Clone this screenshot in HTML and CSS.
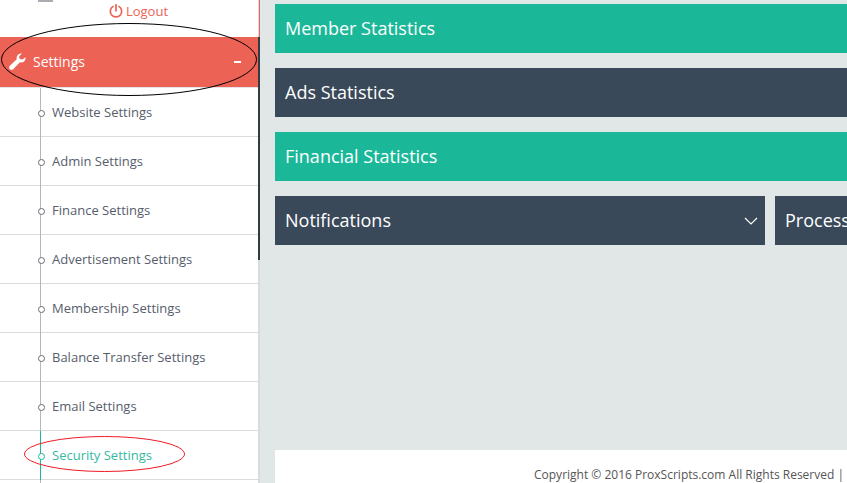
FILE: index.html
```html
<!DOCTYPE html>
<html lang="en">
<head>
<meta charset="utf-8">
<title>Settings</title>
<link rel="stylesheet" href="styles.css">
</head>
<body>
<div class="app">
  <aside class="sidebar">
    <div class="user">
      <span class="avatar-stub"></span>
      <a class="logout">
        <svg class="power" viewBox="0 0 14 14" width="14" height="14"><path d="M4 2.400A5.700 5.700 0 1 0 10 2.400" fill="none" stroke="#ec6255" stroke-width="1.700" stroke-linecap="round"/><path d="M7 .8v6" fill="none" stroke="#ec6255" stroke-width="1.700" stroke-linecap="round"/></svg>Logout
      </a>
    </div>
    <div class="menu-head">
      <svg class="wrench" viewBox="0 0 16 16" width="17" height="17"><path fill="#fff" d="M15.6 3.9c.2 1.500-.3 3-1.400 4-1.100 1-2.600 1.300-4 .9L4 15.200c-.9.9-2.300.9-3.200 0s-.9-2.300 0-3.200l6.500-6.100C6.900 4.500 7.200 3 8.200 1.900 9.200.8 10.700.3 12.200.5L9.500 3.200l.6 2.400 2.400.6z"/></svg>
      <span class="menu-label">Settings</span>
      <span class="minus"></span>
    </div>
    <ul class="submenu">
      <li>Website Settings</li>
      <li>Admin Settings</li>
      <li>Finance Settings</li>
      <li>Advertisement Settings</li>
      <li>Membership Settings</li>
      <li>Balance Transfer Settings</li>
      <li>Email Settings</li>
      <li class="active">Security Settings</li>
      <li></li>
    </ul>
    <span class="edge-red"></span>
    <span class="edge-dark"></span>
    <svg class="ring-black" width="258" height="74" viewBox="0 0 258 74"><ellipse cx="129" cy="36.500" rx="127.500" ry="36" fill="none" stroke="#000" stroke-width="1"/></svg>
    <svg class="ring-red" width="163" height="37" viewBox="0 0 163 37"><ellipse cx="81.500" cy="18" rx="80" ry="17.500" fill="none" stroke="#ee1c25" stroke-width="1"/></svg>
  </aside>
  <main class="main">
    <div class="panel teal"><h2>Member Statistics</h2></div>
    <div class="panel navy"><h2>Ads Statistics</h2></div>
    <div class="panel teal"><h2>Financial Statistics</h2></div>
    <div class="split">
      <div class="panel navy half">
        <h2>Notifications</h2>
        <svg class="chev" width="14" height="8" viewBox="0 0 14 8"><path d="M1 1l6 6 6-6" fill="none" stroke="#fff" stroke-width="1.200"/></svg>
      </div>
      <div class="panel navy rest"><h2>Processing</h2></div>
    </div>
    <footer class="foot"><span>Copyright © 2016 ProxScripts.com All Rights Reserved |</span></footer>
  </main>
</div>
</body>
</html>
```
FILE: styles.css
```css
* { box-sizing: border-box; }
html, body { margin: 0; height: 100%; overflow: hidden; }
body { font-family: "Open Sans", sans-serif; background: #e1e6e6; }
.app { display: flex; width: 847px; height: 483px; overflow: hidden; }

.sidebar {
  position: relative;
  flex: 0 0 260px;
  background: #fff;
  border-right: 2px solid #d8dcdc;
}
.user { position: relative; height: 37px; padding-top: 1px; display: flex; justify-content: center; padding-left: 19px; }
.avatar-stub { position: absolute; left: 38px; top: 0; width: 15px; height: 2px; background: #a9adb2; }
.logout { display: flex; align-items: center; height: 19px; font-size: 13px; color: #ec6255; }
.power { margin-right: 3px; }

.menu-head {
  display: flex;
  align-items: center;
  height: 51px;
  background: #ec6255;
  border-bottom: 1px solid #e4e4e4;
  color: #fff;
  padding: 0 17px 1px 9px;
}
.wrench { margin-right: 7px; }
.menu-label { font-size: 14px; flex: 1; }
.minus { width: 7px; height: 2px; background: #fff; }

.submenu { list-style: none; margin: 0; padding: 0; position: relative; }
.submenu li {
  position: relative;
  height: 49px;
  line-height: 48px;
  padding-left: 52px;
  font-size: 13px;
  color: #565d6b;
  border-bottom: 1px solid #d9dcdc;
}
.submenu li::before {
  content: "";
  position: absolute;
  left: 40px;
  top: 0;
  bottom: -1px;
  width: 1px;
  background: #b4b8bb;
}
.submenu li::after {
  content: "";
  position: absolute;
  left: 38px;
  top: 22px;
  width: 5px;
  height: 5px;
  border: 1px solid #666c73;
  border-radius: 50%;
  background: #fff;
}
.submenu li:last-child::after { display: none; }
.submenu li.active { color: #35b99f; }
.submenu li.active::before { background: #1ab899; }
.submenu li.active::after { border-color: #1ab899; }

.edge-red { position: absolute; right: -2px; top: 0; width: 1px; height: 37px; background: #ec6255; }
.edge-dark { position: absolute; right: -2px; top: 37px; width: 2px; height: 223px; background: #333a40; }
.ring-black { position: absolute; left: 0; top: 23px; }
.ring-red { position: absolute; left: 23px; top: 436px; }

.main { flex: 1; min-width: 0; padding: 4px 0 0 15px; display: flex; flex-direction: column; overflow: hidden; }
.panel { display: flex; align-items: center; height: 49px; margin-bottom: 15px; color: #fff; padding: 0 10px 2px; flex: none; width: 610px; }
.panel h2 { margin: 0; font-size: 18px; font-weight: 400; white-space: nowrap; }
.teal { background: #1ab899; }
.navy { background: #394959; }
.split { display: flex; gap: 10px; flex: none; width: 600px; }
.half { flex: 0 0 490px; width: 490px; justify-content: space-between; padding-right: 7px; }
.chev { position: relative; top: 1px; }
.rest { flex: 0 0 200px; }
.foot {
  margin-top: auto;
  height: 33px;
  flex: none;
  background: #fff;
  width: 610px;
  padding: 16px 0 0 259px;
  font-size: 12px;
  line-height: 17px;
  color: #555;
  white-space: nowrap;
}
```
